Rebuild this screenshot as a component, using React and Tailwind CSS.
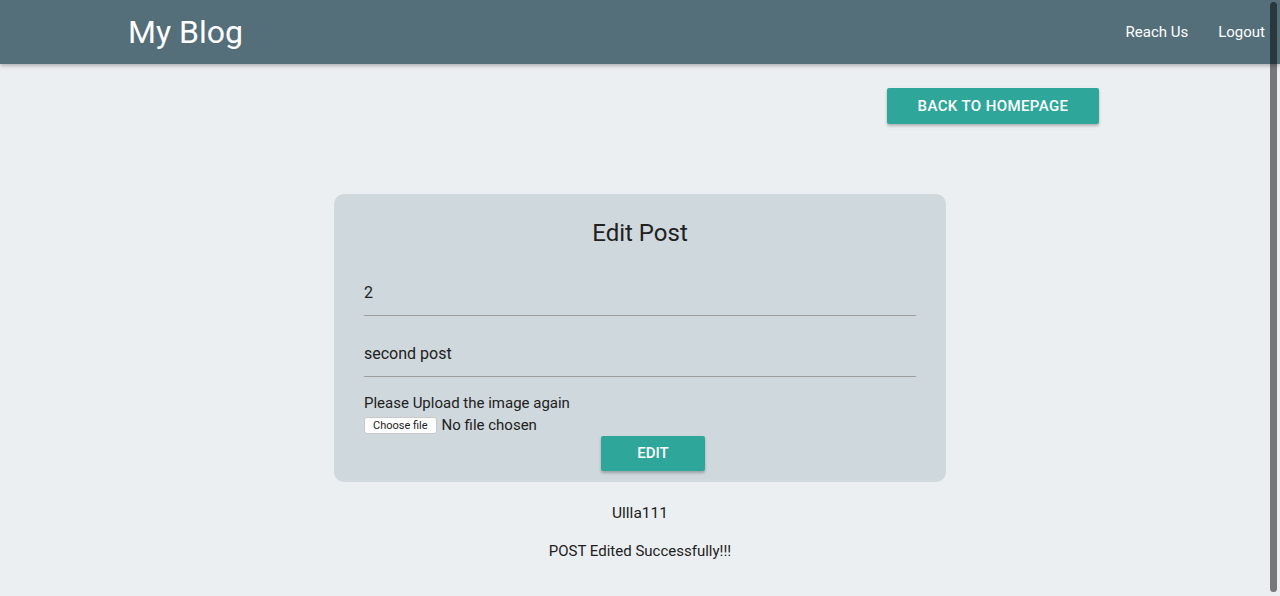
import React from "react";

function Navbar() {
  return (
    <nav className="h-16 bg-[#546e7a] shadow-[0_2px_4px_rgba(0,0,0,0.25)] flex items-center justify-between text-white relative z-10">
      <a className="pl-[128px] text-[32px] leading-none">My Blog</a>
      <ul className="flex">
        <li className="px-[15px] text-[15px]">Reach Us</li>
        <li className="px-[15px] text-[15px]">Logout</li>
      </ul>
    </nav>
  );
}

export default function App() {
  return (
    <div
      className="min-h-[596px] bg-[#eceff1] text-[#212121] relative"
      style={{ fontFamily: "Roboto, 'Noto Sans', sans-serif" }}
    >
      <Navbar />

      <div className="flex justify-end pr-[181px] mt-6">
        <button className="h-9 w-[212px] bg-[#2ea69a] text-white text-[15px] font-medium uppercase tracking-[0.4px] rounded-[2px] shadow-[0_2px_3px_rgba(0,0,0,0.25)]">
          Back to homepage
        </button>
      </div>

      <div className="mt-[70px] mx-auto w-[612px] bg-[#cfd8dc] rounded-[10px] px-[30px] pt-6 pb-[11px]">
        <h4 className="text-center text-2xl leading-7 pt-px">Edit Post</h4>

        <div className="mt-[21px] h-12 pt-[3px] border-b border-[#9e9e9e] flex items-center text-base">2</div>
        <div className="mt-[13px] h-12 pt-[3px] border-b border-[#9e9e9e] flex items-center text-base">second post</div>

        <p className="mt-4 text-[15px] leading-5">Please Upload the image again</p>
        <div className="flex items-center h-5 mt-[2px]">
          <span className="h-[17px] px-2 bg-white border border-[#c8c8c8] rounded-[3px] text-[11px] leading-[15px]">
            Choose file
          </span>
          <span className="ml-[5px] text-[15px]">No file chosen</span>
        </div>

        <div className="flex justify-center pl-[26px] mt-px">
          <button className="h-[35px] w-[104px] bg-[#2ea69a] text-white text-[15px] font-medium uppercase rounded-[2px] shadow-[0_2px_3px_rgba(0,0,0,0.25)]">
            Edit
          </button>
        </div>
      </div>

      <p className="mt-[21px] text-center text-[15.5px] leading-5">Ullla111</p>
      <p className="mt-[18px] text-center text-[15px] leading-5">POST Edited Successfully!!!</p>

      {/* overlay scrollbar */}
      <div className="absolute right-[3px] top-[2px] w-[7px] h-[590px] rounded-full bg-black/50 z-20" />
    </div>
  );
}
